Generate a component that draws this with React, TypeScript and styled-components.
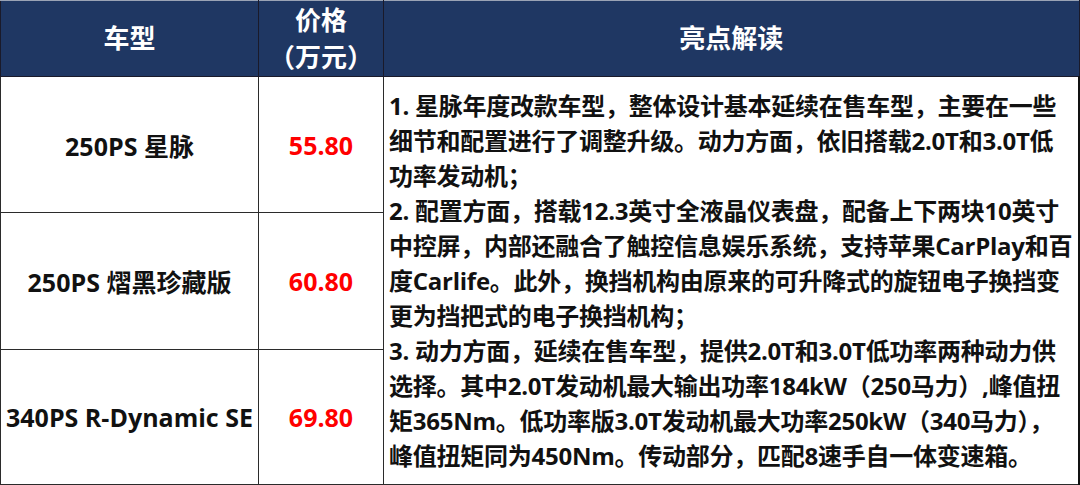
import React from "react";
import styled, { createGlobalStyle } from "styled-components";

const GlobalStyle = createGlobalStyle`
  html, body {
    margin: 0;
    padding: 0;
    background: #ffffff;
  }
  body {
    font-family: "Open Sans", "Noto Sans CJK SC", sans-serif;
  }
`;

const Table = styled.table`
  width: 1080px;
  height: 485px;
  border-collapse: collapse;
  table-layout: fixed;
  font-weight: 700;
  font-size: 25px;
  color: #111111;
`;

const HeadRow = styled.tr`
  height: 76px;
  background: #1f3763;
`;

const HeadCell = styled.th`
  border: 1px solid #1a1a2a;
  border-top-color: #9aa3b5;
  color: #ffffff;
  font-size: 26px;
  font-weight: 700;
  line-height: 37px;
  text-align: center;
  vertical-align: middle;
  padding: 0;
`;

const BodyRow = styled.tr<{ $h: number }>`
  height: ${(p) => p.$h}px;
`;

const Cell = styled.td<{ $red?: boolean }>`
  border: 1px solid #2b2b2b;
  text-align: center;
  vertical-align: middle;
  padding: 0;
  color: ${(p) => (p.$red ? "#ff0000" : "#111111")};
  white-space: nowrap;
`;

const NoteCell = styled.td`
  border: 1px solid #2b2b2b;
  border-right: 2px solid #111111;
  vertical-align: middle;
  padding: 0 0 0 5px;
  text-align: left;
  font-size: 24px;
  font-weight: 700;
  letter-spacing: -0.25px;
`;

const Line = styled.div`
  line-height: 35px;
  white-space: nowrap;
`;

const models = [
  { name: "250PS 星脉", price: "55.80", h: 136 },
  { name: "250PS 熠黑珍藏版", price: "60.80", h: 136 },
  { name: "340PS R-Dynamic SE", price: "69.80", h: 135 },
];

const notes = [
  "1. 星脉年度改款车型，整体设计基本延续在售车型，主要在一些",
  "细节和配置进行了调整升级。动力方面，依旧搭载2.0T和3.0T低",
  "功率发动机；",
  "2. 配置方面，搭载12.3英寸全液晶仪表盘，配备上下两块10英寸",
  "中控屏，内部还融合了触控信息娱乐系统，支持苹果CarPlay和百",
  "度Carlife。此外，换挡机构由原来的可升降式的旋钮电子换挡变",
  "更为挡把式的电子换挡机构；",
  "3. 动力方面，延续在售车型，提供2.0T和3.0T低功率两种动力供",
  "选择。其中2.0T发动机最大输出功率184kW（250马力）,峰值扭",
  "矩365Nm。低功率版3.0T发动机最大功率250kW（340马力），",
  "峰值扭矩同为450Nm。传动部分，匹配8速手自一体变速箱。",
];

const App: React.FC = () => {
  return (
    <>
      <GlobalStyle />
      <Table>
        <colgroup>
          <col style={{ width: 258 }} />
          <col style={{ width: 125 }} />
          <col />
        </colgroup>
        <thead>
          <HeadRow>
            <HeadCell>车型</HeadCell>
            <HeadCell>
              价格
              <br />
              （万元）
            </HeadCell>
            <HeadCell>亮点解读</HeadCell>
          </HeadRow>
        </thead>
        <tbody>
          {models.map((m, i) => (
            <BodyRow key={m.name} $h={m.h}>
              <Cell>{m.name}</Cell>
              <Cell $red>{m.price}</Cell>
              {i === 0 && (
                <NoteCell rowSpan={3}>
                  {notes.map((n) => (
                    <Line key={n}>{n}</Line>
                  ))}
                </NoteCell>
              )}
            </BodyRow>
          ))}
        </tbody>
      </Table>
    </>
  );
};

export default App;
